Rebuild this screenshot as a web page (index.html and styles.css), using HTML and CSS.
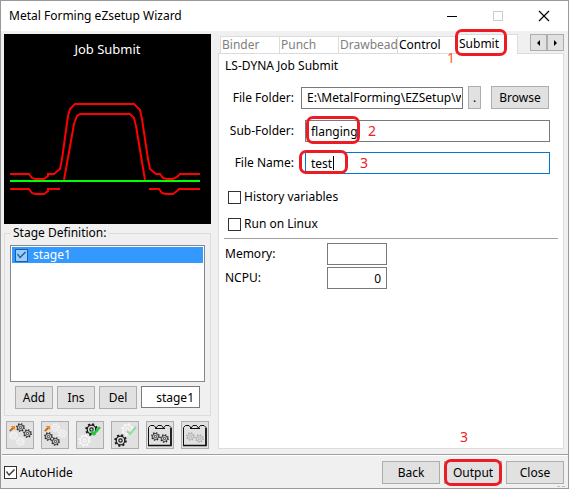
FILE: index.html
```html
<!DOCTYPE html>
<html lang="en">
<head>
<meta charset="utf-8">
<title>Metal Forming eZsetup Wizard</title>
<link rel="stylesheet" href="styles.css">
</head>
<body>
<svg class="defs" aria-hidden="true">
  <symbol id="gear" viewBox="0 0 10 10">
    <circle cx="5" cy="5" r="4.200" fill="none" stroke="currentColor" stroke-width="1.300" stroke-dasharray="1.600 1.700"/>
    <circle cx="5" cy="5" r="3.300" fill="none" stroke="currentColor" stroke-width="1"/>
    <circle cx="5" cy="5" r="1.300" fill="none" stroke="currentColor" stroke-width="0.900"/>
  </symbol>
  <symbol id="arrow" viewBox="0 0 8 8">
    <path d="M1 7 5 3" stroke="#b8641c" stroke-width="2.200"/>
    <path d="M2 1H7V6Z" fill="#f08a1c"/>
  </symbol>
  <symbol id="folder" viewBox="0 0 26 26">
    <path d="M1.500 23.500V5.500L3.500 3.500H7L9 6L11 3.500H14.500L16.500 6L18.500 3.500H22L24 5.500V23.500" fill="none" stroke="#111"/>
    <path d="M1 23.500H24V6" fill="none" stroke="#111" stroke-width="1.600"/>
    <path d="M8 6.500H18" stroke="#111"/>
  </symbol>
</svg>
<main class="window">
  <header class="titlebar">
    <h1>Metal Forming eZsetup Wizard</h1>
    <div class="caption">
      <button type="button" aria-label="Minimize"><svg width="12" height="12"><path d="M1 6.500H11" stroke="#000"/></svg></button>
      <button type="button" aria-label="Maximize" disabled><svg width="12" height="12"><rect x="1.500" y="1.500" width="9" height="9" fill="none" stroke="#ccc"/></svg></button>
      <button type="button" aria-label="Close window"><svg width="12" height="12"><path d="M1 1 11 11M11 1 1 11" stroke="#000" stroke-width="1.200"/></svg></button>
    </div>
  </header>

  <div class="content">
    <section class="side">
      <div class="preview">
        <h2>Job Submit</h2>
        <svg viewBox="0 0 207 190" fill="none" stroke="#f00" stroke-width="2" aria-hidden="true">
          <path d="M6 140H25L28 144L31 145H40L44 142V140H50L56 135L58 125L64 82L66 75L71 70H130L136 76L138 85L144 125L146 135L152 140H156L159 144L163 145H169L173 143L176 140H196"/>
          <path d="M60 146L70 90L73 82L76 80H126L130 84L132 92L141 146"/>
          <path d="M6 155H25L28 159L31 160H40L44 157V155H56M145 155H155L158 159L162 160H169L173 157L175 155H196"/>
          <path d="M6 147H196" stroke="#0f0"/>
        </svg>
      </div>
      <fieldset class="stages">
        <legend>Stage Definition:</legend>
        <div class="list">
          <label class="row"><input class="check" type="checkbox" checked>stage1</label>
        </div>
        <div class="edit">
          <button type="button" class="btn">Add</button>
          <button type="button" class="btn">Ins</button>
          <button type="button" class="btn">Del</button>
          <input class="field" type="text" value="stage1" aria-label="Stage name">
        </div>
      </fieldset>
      <div class="tools">
        <button type="button" aria-label="Activate upper gears"><svg viewBox="0 0 26 26"><use href="#arrow" x="2" y="3" width="7" height="7"/><use class="dark" href="#gear" x="9" y="1" width="9" height="9"/><use class="dark" href="#gear" x="16" y="7" width="9" height="9"/><use class="pale" href="#gear" x="2" y="9" width="9" height="9"/><use class="pale" href="#gear" x="9" y="15" width="9" height="9"/></svg></button>
        <button type="button" aria-label="Activate lower gears"><svg viewBox="0 0 26 26"><use href="#arrow" x="2" y="3" width="7" height="7"/><use class="pale" href="#gear" x="9" y="1" width="9" height="9"/><use class="pale" href="#gear" x="16" y="7" width="9" height="9"/><use class="dark" href="#gear" x="2" y="10" width="9" height="9"/><use class="dark" href="#gear" x="9" y="15" width="9" height="9"/></svg></button>
        <button type="button" aria-label="Check upper gear"><svg viewBox="0 0 26 26"><use class="pale" href="#gear" x="1" y="12" width="13" height="13"/><use class="dark" href="#gear" x="8" y="1" width="13" height="13"/><path d="M14 9 17 12 23 5" fill="none" stroke="#19cf3a" stroke-width="2.500"/></svg></button>
        <button type="button" aria-label="Check lower gear"><svg viewBox="0 0 26 26"><use class="pale" href="#gear" x="9" y="1" width="13" height="13"/><path d="M15 9 18 12 24 5" fill="none" stroke="#8edda0" stroke-width="2"/><use class="dark" href="#gear" x="2" y="12" width="13" height="13"/></svg></button>
        <button type="button" aria-label="Load stages"><svg viewBox="0 0 26 26"><use href="#folder" width="26" height="26"/><use class="dark" href="#gear" x="4" y="10" width="9" height="9"/><use class="dark" href="#gear" x="13" y="12" width="9" height="9"/></svg></button>
        <button type="button" aria-label="Clear stages"><svg viewBox="0 0 26 26"><use href="#folder" width="26" height="26"/><use class="mid" href="#gear" x="4" y="10" width="9" height="9"/><use class="mid" href="#gear" x="13" y="12" width="9" height="9"/></svg></button>
      </div>
    </section>

    <section class="book">
      <div class="tabbar">
        <div class="tabs" role="tablist">
          <button type="button" role="tab" disabled>Binder</button>
          <button type="button" role="tab" disabled>Punch</button>
          <button type="button" role="tab" disabled>Drawbead</button>
          <button type="button" role="tab">Control</button>
          <button type="button" role="tab" class="active" aria-selected="true">Submit<span class="ring ring-tab"></span><span class="note note-tab">1</span></button>
        </div>
        <div class="scroll">
          <button type="button" class="btn" aria-label="Previous tabs"><svg width="5" height="8"><path d="M4 1V7L1 4Z"/></svg></button>
          <button type="button" class="btn" aria-label="Next tabs"><svg width="5" height="8"><path d="M1 1V7L4 4Z"/></svg></button>
        </div>
      </div>
      <form class="panel" id="job">
        <h2>LS-DYNA Job Submit</h2>
        <div class="line folder">
          <label for="folder-path">File Folder:</label>
          <input class="field grow" id="folder-path" type="text" value="E:\MetalForming\EZSetup\work">
          <button type="button" class="btn dot">.</button>
          <button type="button" class="btn wide">Browse</button>
        </div>
        <div class="line">
          <label for="sub">Sub-Folder:</label>
          <div class="marked"><input class="field" id="sub" type="text" value="flanging"><span class="ring ring-sub"></span><span class="note note-sub">2</span></div>
        </div>
        <div class="line">
          <label for="name">File Name:</label>
          <div class="marked"><input class="field focus" id="name" type="text" value="test"><span class="caret"></span><span class="ring ring-name"></span><span class="note note-name">3</span></div>
        </div>
        <div class="options">
          <label><input class="check" type="checkbox">History variables</label>
          <label><input class="check" type="checkbox">Run on Linux</label>
        </div>
        <hr>
        <div class="limits">
          <label for="memory">Memory:</label><input class="field" id="memory" type="text">
          <label for="ncpu">NCPU:</label><input class="field" id="ncpu" type="text" value="0">
        </div>
      </form>
    </section>
  </div>

  <footer class="footer">
    <label><input class="check" type="checkbox" checked>AutoHide</label>
    <div class="actions">
      <button type="button" class="btn wide">Back</button>
      <button type="submit" form="job" class="btn wide output">Output<span class="ring ring-out"></span><span class="note note-out">3</span></button>
      <button type="button" class="btn wide">Close</button>
    </div>
    <span class="grip"></span>
  </footer>
</main>
</body>
</html>
```

FILE: styles.css
```css
* { box-sizing: border-box; }

body {
  margin: 0;
  background: #f0f0f0;
  color: #000;
  font: 12px/16px "Noto Sans", "Open Sans", sans-serif;
}

h1, h2 { margin: 0; font-size: inherit; font-weight: normal; }
button, input { margin: 0; padding: 0; font: inherit; color: inherit; border-radius: 0; }
button { border: 0; background: none; }
.defs { position: absolute; width: 0; height: 0; }

.window {
  display: flex;
  flex-direction: column;
  min-height: 100vh;
  border: 1px solid #999;
}

/* Title bar */
.titlebar {
  display: flex;
  align-items: center;
  justify-content: space-between;
  height: 30px;
  padding: 0 6px 0 8px;
  background: #fff;
}
.caption { display: flex; gap: 10px; }
.caption button { width: 36px; height: 28px; display: flex; align-items: center; justify-content: center; }

.content { flex: 1; display: flex; gap: 7px; padding: 3px 4px 5px 3px; }

/* Left side */
.side { flex: none; width: 207px; display: flex; flex-direction: column; }
.preview { display: grid; background: #000; color: #fff; text-align: center; }
.preview > * { grid-area: 1 / 1; }
.preview h2 { padding-top: 7px; font-size: 13px; }
.preview svg { display: block; width: 100%; }

.stages {
  flex: 1;
  display: flex;
  flex-direction: column;
  gap: 4px;
  min-width: 0;
  margin: 1px 0 0;
  padding: 4px 5px 6px;
  border: 1px solid #dcdcdc;
}
.stages legend { margin-left: 1px; padding: 0 2px; }
.list { flex: 1; min-height: 128px; padding: 1px; border: 1px solid #828790; background: #fff; }
.row { display: flex; align-items: center; gap: 5px; padding-left: 3px; background: #3399ff; color: #fff; }
.row .check { border-color: #1b5f9e; background: #99ccff; color: #1f5d98; }
.edit { display: flex; gap: 4px; padding: 0 5px; }
.edit .btn { width: 38px; }
.edit .field { flex: 1; text-align: right; }

.tools { display: flex; justify-content: space-between; padding: 5px 2px 0; }
.tools button { width: 28px; height: 28px; border: 1px solid #adadad; background: #e1e1e1; }
.tools svg { display: block; width: 26px; height: 26px; }
.dark { color: #1c1c1c; }
.mid { color: #aaa; }
.pale { color: #f8f8f8; }

/* Shared controls */
.btn {
  position: relative;
  height: 23px;
  border: 1px solid #adadad;
  background: #e1e1e1;
  text-align: center;
}
.wide { width: 58px; }
.field {
  min-width: 0;
  height: 22px;
  padding: 0 5px;
  border: 1px solid #7a7a7a;
  background: #fff;
  outline: 0;
}
.field.grow { padding-right: 1px; }
.focus { border-color: #0078d7; }
.check {
  flex: none;
  appearance: none;
  width: 13px;
  height: 13px;
  border: 1px solid #333;
  background: #fff;
  color: #333;
}
.check:checked::before {
  content: "";
  display: block;
  width: 11px;
  height: 11px;
  background: currentColor;
  clip-path: polygon(1px 5px, 2px 4px, 4px 7px, 9px 2px, 10px 3px, 4px 9px);
}

/* Tabs */
.book { flex: 1; min-width: 0; display: flex; flex-direction: column; }
.tabbar { display: flex; justify-content: space-between; height: 19px; }
.tabs { display: flex; align-items: flex-end; padding-left: 2px; }
.tabs button {
  position: relative;
  width: 59px;
  height: 17px;
  padding-left: 1px;
  border: 1px solid #dcdcdc;
  border-width: 1px 0 0 1px;
  background: #fff;
  text-align: left;
  white-space: nowrap;
}
.tabs button:disabled { color: #808080; }
.tabs .active { width: 62px; height: 20px; margin-bottom: -1px; padding: 0 0 2px 2px; border-right-width: 1px; }
.scroll { display: flex; }
.scroll .btn { width: 17px; height: 17px; display: flex; align-items: center; justify-content: center; }

.panel { flex: 1; padding: 4px 5px 0; border: 1px solid #dcdcdc; background: #fff; }
.panel h2 { padding-left: 1px; }
.line { display: flex; align-items: center; margin: 0 8px 10px 0; }
.line label { flex: none; width: 70px; margin-right: 11px; text-align: right; }
.folder { margin: 12px 9px 11px 0; }
.folder label { margin-right: 7px; }
.grow { flex: 1; }
.dot { width: 13px; margin: 0 10px 0 5px; }
.marked { position: relative; flex: 1; display: flex; }
.marked .field { width: 100%; }
.options { display: flex; flex-direction: column; gap: 11px; padding: 5px 4px 0; }
.options label, .footer label { display: flex; align-items: center; gap: 3px; }
.panel hr { height: 1px; margin: 6px 0 4px; border: 0; background: #a0a0a0; }
.limits { display: grid; grid-template-columns: 102px 60px; gap: 2px 0; align-items: center; padding-left: 1px; }
.limits .field { text-align: right; }

/* Footer */
.footer {
  position: relative;
  display: flex;
  align-items: center;
  justify-content: space-between;
  margin-left: 1px;
  padding: 6px 4px 4px 2px;
  border-top: 1px solid #a0a0a0;
  box-shadow: inset 0 1px #fff;
}
.actions { display: flex; gap: 4px; }
.grip { position: absolute; right: 3px; bottom: 1px; width: 8px; border-bottom: 1px dashed #bbb; }

/* Hand-drawn highlights over the controls */
.ring { position: absolute; border: 3px solid #ed1c24; border-radius: 7px; pointer-events: none; }
.note { position: absolute; color: #ed1c24; font-size: 14px; pointer-events: none; }
.ring-tab { left: -2px; top: -6px; width: 52px; height: 27px; }
.note-tab { left: -10px; top: 15px; color: #ff5a1f; }
.ring-sub { left: 1px; top: -4px; width: 54px; height: 28px; }
.note-sub { left: 63px; top: 3px; }
.ring-name { left: -6px; top: -2px; width: 49px; height: 24px; }
.note-name { left: 55px; top: 3px; }
.ring-out { left: -1px; top: -3px; width: 58px; height: 27px; }
.note-out { left: 15px; top: -33px; }
.caret { position: absolute; left: 28px; top: 4px; width: 1px; height: 14px; background: #000; }
```
